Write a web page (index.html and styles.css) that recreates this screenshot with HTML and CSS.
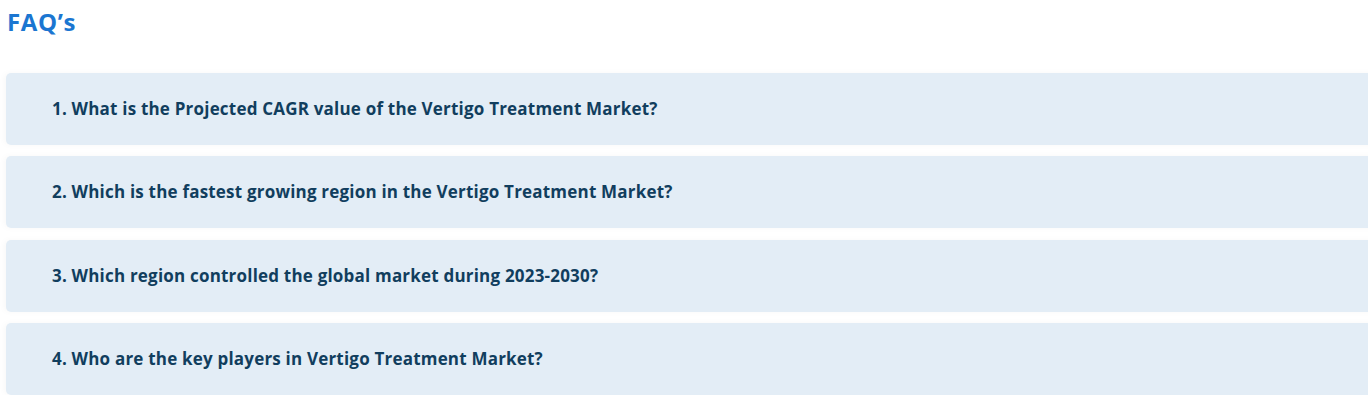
FILE: index.html
```html
<!DOCTYPE html>
<html>
	<head>
		<link rel="stylesheet" href="styles.css">
		<title>FAQ's</title>
	</head>
	<body>
		<h2 class="faq-title">FAQ’s</h2>
		<div class="faq-list">
			<div class="faq-item">1. What is the Projected CAGR value of the Vertigo Treatment Market?</div>
			<div class="faq-item">2. Which is the fastest growing region in the Vertigo Treatment Market?</div>
			<div class="faq-item">3. Which region controlled the global market during 2023-2030?</div>
			<div class="faq-item">4. Who are the key players in Vertigo Treatment Market?</div>
		</div>
	</body>
</html>
```

FILE: styles.css
```css
html {
	background-color: #fff;
}
body {
	margin: 0;
	font-family: "Open Sans", Lato, sans-serif;
	overflow: hidden;
}
.faq-title {
	margin: 0;
	padding: 7px 0 0 7px;
	height: 65px;
	box-sizing: border-box;
	font-size: 24px;
	font-weight: 700;
	letter-spacing: 0.6px;
	color: #1b76d1;
	line-height: 30px;
}
.faq-list {
	display: flex;
	flex-direction: column;
	gap: 11.33px;
	margin-left: 6px;
	padding-top: 8px;
	margin-right: -10px;
}
.faq-item {
	background-color: #e3edf6;
	border-radius: 5px;
	height: 72px;
	display: flex;
	align-items: center;
	padding-left: 46px;
	padding-bottom: 1px;
	box-sizing: border-box;
	font-size: 17px;
	font-weight: 700;
	letter-spacing: 0.2px;
	color: #113e5e;
	box-shadow: -2px 0 6px rgba(0, 0, 0, 0.03);
}
```
